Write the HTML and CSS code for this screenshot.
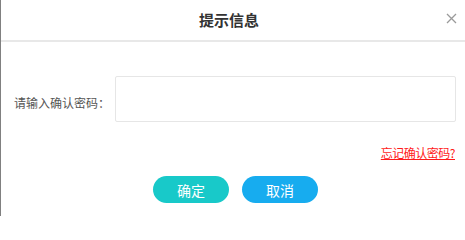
FILE: index.html
```html
<!DOCTYPE html>
<html lang="zh-CN">
<head>
<meta charset="utf-8">
<title>提示信息</title>
<link rel="stylesheet" href="styles.css">
</head>
<body>
<div class="dialog">
  <div class="header">
    <span></span>
    <h1 class="title">提示信息</h1>
    <button class="close" aria-label="关闭">
      <svg width="11" height="11" viewBox="0 0 11 11"><path d="M1 1L10 10M10 1L1 10" stroke="#9a9a9a" stroke-width="1.3" fill="none"/></svg>
    </button>
  </div>
  <div class="content">
    <div class="form-row">
      <label class="label" for="pwd">请输入确认密码：</label>
      <input id="pwd" class="input" type="password">
    </div>
    <div class="link-row">
      <a class="forgot" href="#">忘记确认密码?</a>
    </div>
    <div class="actions">
      <button class="btn btn-ok">确定</button>
      <button class="btn btn-cancel">取消</button>
    </div>
  </div>
</div>
</body>
</html>
```

FILE: styles.css
```css
html, body {
  margin: 0;
  padding: 0;
  background: #fff;
}
body {
  font-family: "Noto Sans CJK SC", "Noto Sans", "Liberation Sans", sans-serif;
  color: #333;
}
.dialog {
  width: 465px;
  height: 216px;
  box-sizing: border-box;
  border-left: 1px solid #808080;
  background: #fff;
}
.header {
  height: 40px;
  border-bottom: 2px solid #e8e8e8;
  display: grid;
  grid-template-columns: 1fr auto 1fr;
  align-items: center;
}
.title {
  margin: 0;
  font-size: 15px;
  font-weight: bold;
  color: #333;
  line-height: 40px;
  padding-right: 8px;
}
.close {
  justify-self: end;
  margin-right: 8px;
  margin-top: -3px;
  width: 11px;
  height: 11px;
  padding: 0;
  border: 0;
  background: none;
  display: flex;
}
.content {
  display: flex;
  flex-direction: column;
}
.form-row {
  margin-top: 34px;
  display: flex;
  align-items: center;
  padding-left: 13px;
  padding-right: 9px;
}
.label {
  font-size: 12px;
  color: #555;
  width: 101px;
  padding-top: 6px;
  white-space: nowrap;
}
.input {
  flex: 1;
  height: 46px;
  box-sizing: border-box;
  border: 1px solid #e6e6e6;
  border-radius: 2px;
  outline: none;
}
.link-row {
  margin-top: 22px;
  display: flex;
  justify-content: flex-end;
  padding-right: 9px;
  line-height: 18px;
}
.forgot {
  font-size: 12px;
  color: #ff1a1a;
  text-decoration: underline;
  letter-spacing: -0.5px;
  padding-right: 1px;
}
.actions {
  margin-top: 14px;
  display: flex;
  justify-content: center;
  gap: 13px;
  padding-left: 5px;
}
.btn {
  width: 76px;
  height: 27px;
  border: 0;
  border-radius: 14px;
  color: #fff;
  font-family: "Noto Sans CJK SC", "Noto Sans", sans-serif;
  font-size: 14px;
  padding: 0;
}
.btn-ok {
  background: #18c9c9;
}
.btn-cancel {
  background: #17acef;
}
```
